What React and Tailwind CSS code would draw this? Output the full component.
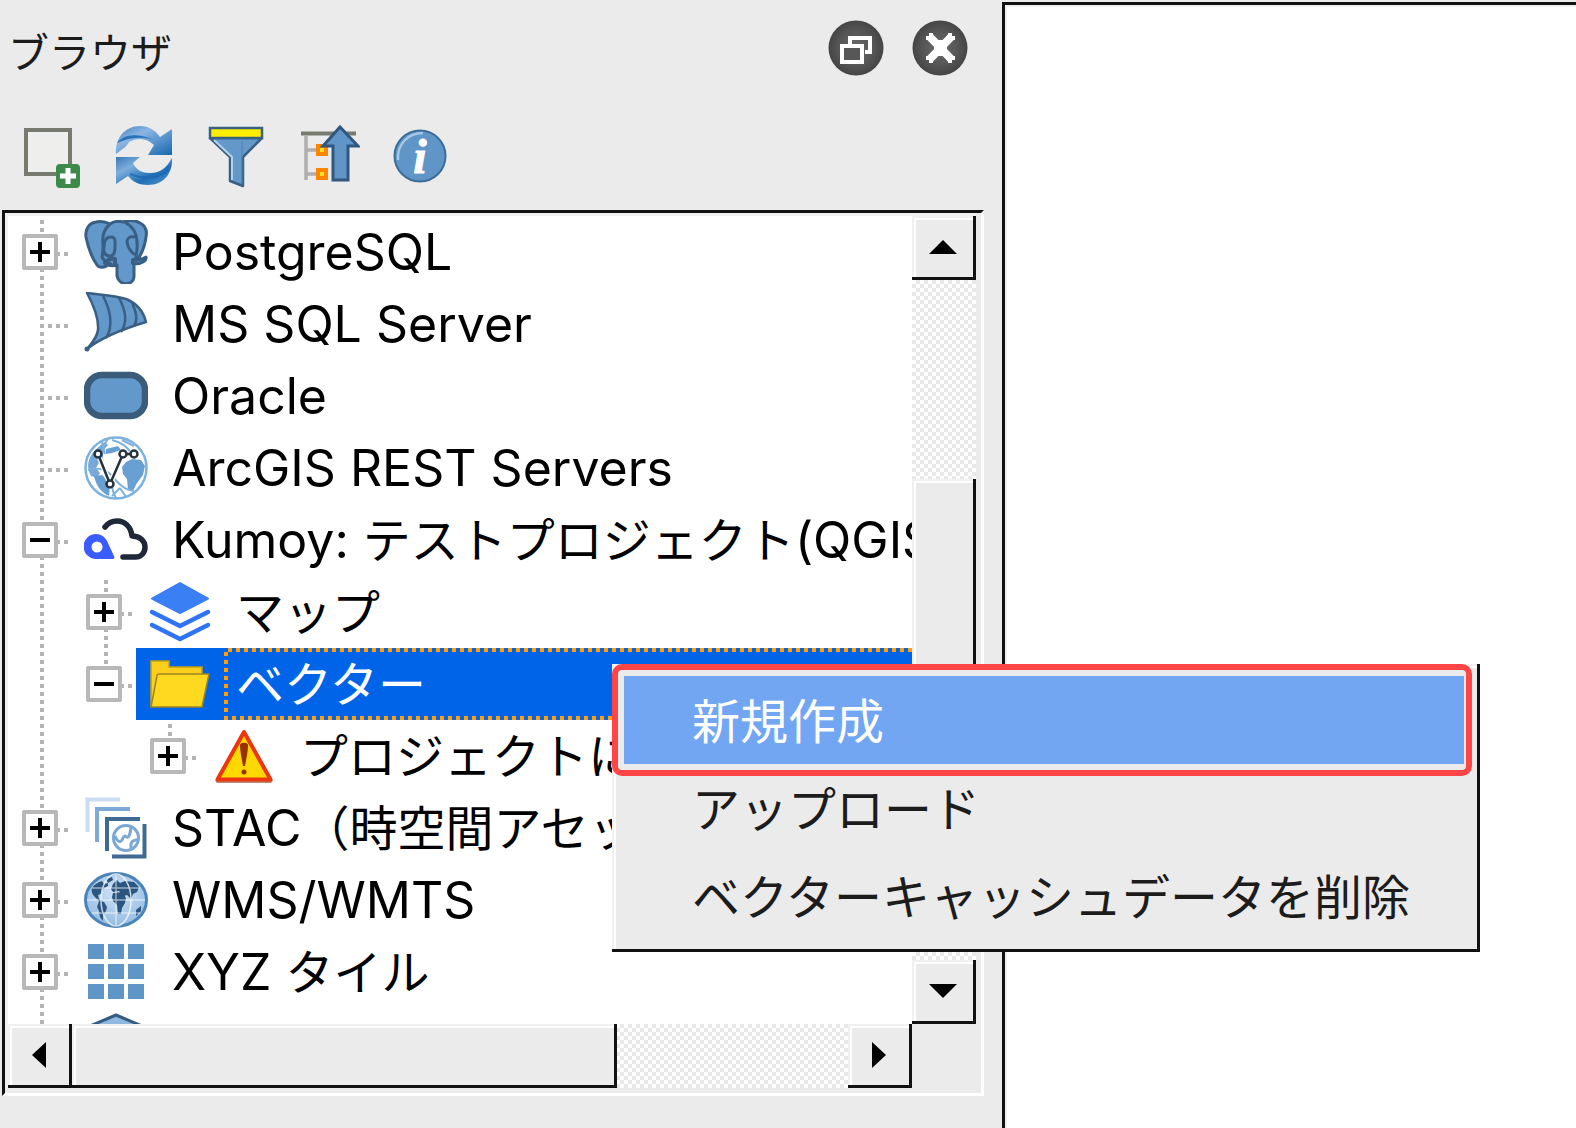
import React from "react";

const JP = "font-['Noto_Sans_CJK_JP',sans-serif]";

/* ---------- title bar icons ---------- */

function RoundIcon({ id, children }) {
  return (
    <svg viewBox="0 0 56 56" className="size-14" aria-hidden="true">
      <defs>
        <radialGradient id={id}>
          <stop offset="0" stopColor="#6a6a6a" />
          <stop offset="0.6" stopColor="#575757" />
          <stop offset="1" stopColor="#454545" />
        </radialGradient>
      </defs>
      <circle cx="28" cy="28" r="27.5" fill={`url(#${id})`} />
      {children}
    </svg>
  );
}

const FloatIcon = () => (
  <RoundIcon id="round-float">
    <path d="M22 24V18H42V32H37" fill="none" stroke="#fff" strokeWidth="4" />
    <rect x="14" y="26" width="20" height="16" fill="#575757" stroke="#fff" strokeWidth="4" />
  </RoundIcon>
);

const CloseIcon = () => (
  <RoundIcon id="round-close">
    <path d="M18 17 39 39M39 17 18 39" stroke="#fff" strokeWidth="8" />
    <rect x="22" y="20" width="13" height="16" fill="#fff" />
    <path d="M14 18h4M19 13v4M38 13v4M39 18h4M14 38h4M19 39v4M38 39v4M39 38h4" stroke="#fff" strokeWidth="4" />
  </RoundIcon>
);

/* ---------- toolbar icons ---------- */

function Icon({ children }) {
  return (
    <svg viewBox="0 0 64 64" className="size-16 shrink-0" aria-hidden="true">
      {children}
    </svg>
  );
}

const AddIcon = () => (
  <Icon>
    <rect x="6" y="6" width="44" height="44" fill="#eeeeec" stroke="#777a6e" strokeWidth="4" />
    <rect x="36" y="40" width="24" height="24" rx="4" fill="#3d8b4b" />
    <path d="M48 44v16M40 52h16" stroke="#fff" strokeWidth="5" />
  </Icon>
);

const RefreshIcon = () => (
  <Icon>
    <defs>
      <linearGradient id="rf-a" x1="0" y1="0" x2="1" y2="1">
        <stop offset="0" stopColor="#3c7ec0" />
        <stop offset="0.35" stopColor="#8ab6e2" />
        <stop offset="1" stopColor="#1767b0" />
      </linearGradient>
      <linearGradient id="rf-b" x1="0" y1="0" x2="1" y2="1">
        <stop offset="0" stopColor="#3a78b8" />
        <stop offset="0.3" stopColor="#7eaedd" />
        <stop offset="0.65" stopColor="#1f6db5" />
        <stop offset="1" stopColor="#5b9bd6" />
      </linearGradient>
    </defs>
    <path d="M4 30C3 14 13 2 28 2c9 0 15 4 20 11L60 5v26H36l6-10c-7-7-16-8-25-3-2 4-6 7-13 12z" fill="url(#rf-a)" />
    <path d="M5 19C11 10 26 8 45 17c-12-5-27-4-40 2z" fill="#2a72b8" />
    <path d="M60 34c1 16-9 27-24 27-9 0-15-3-20-9L4 60V33h24l-7 6c3 7 9 10 17 10 11 0 17-6 22-15z" fill="url(#rf-b)" />
    <path d="M57 45c-7 8-21 12-39 5" fill="none" stroke="#1767b0" strokeWidth="2" opacity="0.7" />
  </Icon>
);

const FilterIcon = () => (
  <Icon>
    <path d="M6 14h52L39 33v29l-13-5V33z" fill="#6398ca" stroke="#3b5f80" strokeWidth="2.5" strokeLinejoin="round" />
    <path d="M10 16 28 33v23" fill="none" stroke="#b5d2ec" strokeWidth="2" />
    <path d="M38 18v42" stroke="#4f81b0" strokeWidth="2" opacity="0.5" />
    <rect x="6" y="4" width="52" height="10" fill="#ffee00" stroke="#3b5f80" strokeWidth="2.5" />
  </Icon>
);

const CollapseIcon = () => (
  <Icon>
    <path d="M5 9.500h55" stroke="#777a6e" strokeWidth="4" />
    <path d="M10 11v45M10 26h10M10 50h10" fill="none" stroke="#aeaeae" strokeWidth="3.500" />
    <rect x="22" y="22" width="8" height="8" fill="#fce61a" stroke="#ff8400" strokeWidth="4" />
    <rect x="22" y="46" width="8" height="8" fill="#fce61a" stroke="#ff8400" strokeWidth="4" />
    <path d="M44 3 62 22H52v34H37V22H27z" fill="#6095c7" stroke="#30587e" strokeWidth="3" />
  </Icon>
);

const InfoIcon = () => (
  <Icon>
    <circle cx="32" cy="32" r="25.500" fill="#6095c7" stroke="#3b6c9a" strokeWidth="2" />
    <path d="M10 36C9 20 20 9 35 9" fill="none" stroke="#a5c7e6" strokeWidth="2.500" />
    <text x="32" y="49" textAnchor="middle" fill="#fff" stroke="#fff" strokeWidth="1" fontFamily="Liberation Serif, serif" fontStyle="italic" fontWeight="700" fontSize="48">i</text>
  </Icon>
);

/* ---------- tree icons ---------- */

const PostgresIcon = () => (
  <Icon>
    <g fill="#6398ca" stroke="#3a5f84" strokeWidth="3" strokeLinejoin="round" strokeLinecap="round">
      <path d="M12 2c5-1 10 0 14 2 4-3 9-3 13-2 5-2 12-2 17 1 6 3 7 9 6 14-1 8-4 16-8 22 3 1 5 0 8-2 1 3-4 7-12 7v13c-1 9-15 9-17-1V45c-3 1-6 1-9 0-4 3-9 3-11 0C8 38 4 27 2 17 1 9 5 3 12 2z" />
      <path d="M26 4c-6 5-8 12-7 20 0 5 0 9-1 13 2 4 5 6 9 7" fill="none" />
      <path d="M27 17c5 0 4 5 4 10 0 4-1 9-5 9-5 0-7-4-6-9 0-6 2-10 7-10z" />
      <path d="M42 3c8 4 12 13 11 26l-1 9" fill="none" />
      <path d="M50 17c-4-1-7 1-7 5 1 6 3 9 7 12" fill="none" />
      <path d="M21 43c3-4 6-5 10-4v6M49 43v-3c2 0 3 0 6-1" fill="none" strokeWidth="4" />
    </g>
  </Icon>
);

const MsSqlIcon = () => (
  <Icon>
    <g stroke="#3a5f84" strokeWidth="2.500" fill="none" strokeLinejoin="round">
      <path d="M3 1c14 2 26 2 39 6 10 4 17 11 20 23C42 36 18 45 3 57c5-6 10-11 11-19C15 26 9 12 3 1z" fill="#6398ca" />
      <path d="M19 4c7 13 11 30 3 42M35 6c6 11 9 24 2 34M48 11c4 8 6 17 2 23" />
    </g>
    <circle cx="3" cy="57" r="2.500" fill="#3a5f84" />
  </Icon>
);

const OracleIcon = () => (
  <Icon>
    <rect x="3" y="11" width="58" height="41" rx="15" fill="#6398ca" stroke="#3a5c7a" strokeWidth="6.500" />
  </Icon>
);

const ArcGisIcon = () => (
  <Icon>
    <circle cx="32" cy="32" r="30.500" fill="#fff" stroke="#7db1de" strokeWidth="2.500" />
    <g fill="#68a0d4">
      <path d="M8 18c4-5 8-9 13-12l3 3-6 7-4 4 2 5-4 7 4 5-3 5-6-2C3 33 3 25 8 18z" opacity="0.9" />
      <path d="M10 40l8-1 6 6 2 6-1 9C18 57 12 50 10 40z" />
      <path d="M42 26l6-3 9 1 4 6-2 9-6 8-4 8-5-1-1-11-4-5-1-7z" />
      <path d="M22 13l12-3 3 4-9 3-6 1z" />
    </g>
    <g fill="none" stroke="#7db1de" strokeWidth="2">
      <path d="M24 3c-7 9-7 20-4 31M28 4c8 2 15 6 19 13M38 4l12 6M4 34c9-3 18-1 24 6s12 14 22 15M32 62c-6-10-5-20 2-31M18 6l3 12M36 52l-8 8M36 52l6 9" />
    </g>
    <g fill="none" stroke="#fff" strokeWidth="5"><path d="M14 18 26 48 39 18h11" /></g>
    <g fill="#fff" stroke="#26333f" strokeWidth="2.500">
      <path d="M14 18 26 48 39 18h11" fill="none" />
      <circle cx="14" cy="18" r="3.500" />
      <circle cx="39" cy="18" r="3.500" />
      <circle cx="50" cy="18" r="3.500" />
      <circle cx="26" cy="48" r="3.500" />
    </g>
  </Icon>
);

const KumoyIcon = () => (
  <Icon>
    <path d="M21 19c3-4 7-6 12-6 8 0 14 6 15 15 8 0 13 5 13 11s-4 10-9 10H39" fill="none" stroke="#1f2738" strokeWidth="5.500" strokeLinecap="round" strokeLinejoin="round" />
    <path fillRule="evenodd" d="M12 26c5 0 9 3 11 7l7 15c1 2 0 3-2 3H12a12.500 12.500 0 0 1 0-25zm1 7.500a5.500 5.500 0 1 0 0 11 5.500 5.500 0 0 0 0-11z" fill="#3a5cff" />
  </Icon>
);

const LayersIcon = () => (
  <Icon>
    <path d="M32 3 60 18.500 32 33 4 18.500z" fill="#3b7ff5" stroke="#3b7ff5" strokeWidth="2" strokeLinejoin="round" />
    <path d="M4 32l28 14 28-14M4 45l28 14 28-14" fill="none" stroke="#2f74f4" strokeWidth="4.500" strokeLinecap="round" strokeLinejoin="round" />
  </Icon>
);

const FolderIcon = () => (
  <Icon>
    <path d="M3 9h18v6h33v8L48 54H3z" fill="#fbcf1b" stroke="#c59e10" strokeWidth="1.500" />
    <path d="M3 55 9 24c0-2 1-2 3-2h49l-7 33z" fill="#ffd91f" stroke="#9c8420" strokeWidth="1.500" />
  </Icon>
);

const WarningIcon = () => (
  <Icon>
    <path d="M32 10 58 56.500H6z" fill="#8a3a1a" stroke="#8a3a1a" strokeWidth="5" strokeLinejoin="round" opacity="0.6" />
    <path d="M32 8 58.500 55.500H5.500z" fill="#ffd800" stroke="#ec3610" strokeWidth="4" strokeLinejoin="round" />
    <path d="M28 21c0-3 8-3 8 0 0 7-2 15-3 21h-2c-1-6-3-14-3-21z" fill="#983000" />
    <circle cx="32" cy="48" r="2.500" fill="#983000" />
  </Icon>
);

const StacIcon = () => (
  <Icon>
    <g fill="none" strokeWidth="4">
      <path d="M3.500 36V3.500H36" stroke="#c9dcf1" />
      <path d="M13 46V13h33" stroke="#7ca9d6" />
      <path d="M23 55V23h33M60.500 28v32.500H28" stroke="#3f6a92" />
      <circle cx="42" cy="42" r="12.500" stroke="#79a8d6" strokeWidth="3" />
      <path d="M31 40c3 7 6 7 8 2s4 2 6-2 2-6 2-10M47 53c0-4-1-6 2-8s4 0 6-3" stroke="#79a8d6" strokeWidth="3" />
    </g>
  </Icon>
);

const WmsIcon = () => (
  <Icon>
    <defs>
      <radialGradient id="wms-sea" cx="0.5" cy="0.35" r="0.7">
        <stop offset="0" stopColor="#cfe2f5" />
        <stop offset="1" stopColor="#8fb9e0" />
      </radialGradient>
    </defs>
    <ellipse cx="32" cy="32" rx="30.500" ry="26.500" fill="url(#wms-sea)" stroke="#4a83b9" strokeWidth="3" />
    <g fill="#2c5680">
      <path d="M8 20c3-4 6-6 10-7l2 3 4-1v3l-5 3-2 5-3 1 1 4 4 2-3 1-6-6c-2-2-3-5-2-8z" />
      <path d="M15 33l5 1 3 5-1 4-3 4v6l-3-4-1-6-2-4z" />
      <path d="M29 16l4-4 3 3 5-2 9 1 5 5-2 5-4 2-2 5-4-4-3 1-5-5-6 1-2-3z" />
      <path d="M29 25l9-1 4 6-1 5-3 5-1 6h-3l-1-9-4-4-1-4z" />
      <path d="M22 11l6-2 1 3-5 3zM52 42l5-4v5l-5 5z" />
    </g>
    <g fill="none" stroke="#fff" strokeWidth="1.500" opacity="0.75">
      <ellipse cx="32" cy="32" rx="15" ry="26" />
      <path d="M32 6v52M3 32h58M8 20h48M8 45h48" opacity="0.7" />
    </g>
  </Icon>
);

const XyzIcon = () => (
  <Icon>
    {[4, 24, 44].map((y) =>
      [4, 24, 44].map((x) => <rect key={`${x}-${y}`} x={x} y={y} width="16" height="15" fill="#5f96c8" />)
    )}
  </Icon>
);

const HexIcon = () => (
  <Icon>
    <path d="M32 3 58 14v34L32 61 6 48V14z" fill="#8fb9e0" stroke="#355c82" strokeWidth="3" strokeLinejoin="round" />
  </Icon>
);

/* ---------- tree ---------- */

/* One indentation column. `up`, `down` and `stub` choose which dotted guides are drawn. */
function Guide({ up, down, stub, box, label }) {
  return (
    <div className="grid h-[72px] w-16 shrink-0 place-items-center">
      <svg viewBox="0 0 64 72" className="col-start-1 row-start-1 h-[72px] w-16" aria-hidden="true">
        <g stroke="#b4b4b4" strokeWidth="4" strokeDasharray="4 4">
          {up && <path d="M34 4V36" />}
          {down && <path d="M34 36V72" />}
          {stub && <path d="M40 38H60" />}
        </g>
      </svg>
      {box && (
        <button
          type="button"
          aria-label={label}
          className="col-start-1 row-start-1 grid size-9 place-items-center rounded-[2px] border-4 border-[#b8b8b8] bg-white"
        >
          <svg viewBox="0 0 20 20" className="size-5" aria-hidden="true">
            <path d={box === "+" ? "M0 10h20M10 0v20" : "M0 10h20"} stroke="#000" strokeWidth="4" />
          </svg>
        </button>
      )}
    </div>
  );
}

const NONE = {};
const LINE = { up: true, down: true };
const LEAF = { up: true, down: true, stub: true };
const OPEN = { ...LEAF, box: "-" };
const SHUT = { ...LEAF, box: "+" };
const LAST_OPEN = { up: true, stub: true, box: "-" };
const LAST_SHUT = { up: true, stub: true, box: "+" };

const ROWS = [
  { guides: [SHUT], icon: PostgresIcon, text: [["PostgreSQL"]] },
  { guides: [LEAF], icon: MsSqlIcon, text: [["MS SQL Server"]] },
  { guides: [LEAF], icon: OracleIcon, text: [["Oracle"]] },
  { guides: [LEAF], icon: ArcGisIcon, text: [["ArcGIS REST Servers"]] },
  { guides: [OPEN], icon: KumoyIcon, text: [["Kumoy: "], ["テストプロジェクト", "ja"], ["(QGIS"]] },
  { guides: [LINE, SHUT], icon: LayersIcon, text: [["マップ", "ja"]] },
  { guides: [LINE, LAST_OPEN], icon: FolderIcon, text: [["ベクター", "ja"]], selected: true },
  { guides: [LINE, NONE, LAST_SHUT], icon: WarningIcon, text: [["プロジェクトに", "ja"]] },
  { guides: [SHUT], icon: StacIcon, text: [["STAC"], ["（時空間アセット", "ja"]] },
  { guides: [SHUT], icon: WmsIcon, text: [["WMS/WMTS"]] },
  { guides: [SHUT], icon: XyzIcon, text: [["XYZ "], ["タイル", "ja"]] },
  { guides: [LEAF], icon: HexIcon, text: [] },
];

const FOCUS =
  "bg-[repeating-linear-gradient(90deg,transparent_0_4px,#ff9f0a_4px_8px),repeating-linear-gradient(90deg,#ff9f0a_0_4px,transparent_4px_8px),repeating-linear-gradient(180deg,transparent_0_4px,#ff9f0a_4px_8px)] bg-[length:100%_4px,100%_4px,4px_100%] bg-[position:top_left,bottom_left,top_left] bg-no-repeat";

function Row({ guides, icon: RowIcon, text, selected }) {
  const name = text.map(([t]) => t).join("");
  return (
    <li role="treeitem" aria-selected={!!selected} className="flex h-[72px] shrink-0">
      {guides.map((g, i) => (
        <Guide key={i} {...g} label={name} />
      ))}
      <div className={`flex min-w-0 flex-1 items-center pl-3 ${selected ? "bg-[#0064e9] text-white" : "text-black"}`}>
        <RowIcon />
        <div
          className={`ml-3 h-full min-w-0 flex-1 overflow-hidden pl-3 font-['Inter','Noto_Sans_CJK_JP',sans-serif] text-[50px] leading-[72px] whitespace-pre ${selected ? FOCUS : ""}`}
        >
          {text.map(([t, lang], i) => (
            <span key={i} lang={lang} className={lang ? `${JP} text-[48px] leading-none` : ""}>
              {t}
            </span>
          ))}
        </div>
      </div>
    </li>
  );
}

/* ---------- scroll bars ---------- */

const BEVEL = "border-r-[3px] border-b-[3px] border-[#111] bg-[#ebebeb] shadow-[inset_2px_2px_0_#f1f1f1,inset_4px_4px_0_#fff]";
const TRACK = "bg-[repeating-conic-gradient(#e8e8e8_0_25%,#fff_0_50%)] bg-[length:8px_8px]";

function ArrowButton({ d, label }) {
  return (
    <button type="button" aria-label={label} className={`grid size-16 shrink-0 place-items-center ${BEVEL}`}>
      <svg viewBox="0 0 28 28" className="size-7" aria-hidden="true">
        <path d={d} fill="#000" />
      </svg>
    </button>
  );
}

/* ---------- page ---------- */

const TOOLS = [
  ["選択レイヤを追加", AddIcon],
  ["再読み込み", RefreshIcon],
  ["ブラウザをフィルタ", FilterIcon],
  ["すべて折りたたむ", CollapseIcon],
  ["プロパティウィジェット", InfoIcon],
];

function BrowserPanel() {
  return (
    <section className="flex min-h-0 min-w-0 flex-col pb-8">
      <header className="flex h-24 items-center justify-between pr-[34px] pl-2">
        <h1 lang="ja" className={`${JP} pt-1 text-[41px] leading-[60px] text-[#1c1c1c]`}>ブラウザ</h1>
        <div className="flex gap-7">
          <button type="button" aria-label="フロート"><FloatIcon /></button>
          <button type="button" aria-label="閉じる"><CloseIcon /></button>
        </div>
      </header>
      <div role="toolbar" className="flex gap-7 px-5 pt-7 pb-[22px]">
        {TOOLS.map(([label, ToolIcon]) => (
          <button key={label} type="button" aria-label={label}><ToolIcon /></button>
        ))}
      </div>
      <div className="mr-[18px] ml-[2px] flex min-h-0 flex-1 flex-col border-[3px] border-t-[#111] border-r-white border-b-white border-l-[#111] bg-[#ebebeb]">
        <div className="mr-[5px] mb-[5px] grid min-h-0 flex-1 grid-cols-[minmax(0,1fr)_64px] grid-rows-[minmax(0,1fr)_64px] border-t-[3px] border-l-[3px] border-[#f1f1f1]">
          <ul role="tree" className="flex flex-col overflow-hidden bg-white">
            {ROWS.map((row, i) => (
              <Row key={i} {...row} />
            ))}
          </ul>
          <div className={`flex flex-col ${TRACK}`}>
            <ArrowButton label="上へ" d="M14 7 28 21H0z" />
            <div className="flex-[200_1_0%]" />
            <div className={`flex-[400_1_0%] ${BEVEL}`} />
            <div className="flex-[80_1_0%]" />
            <ArrowButton label="下へ" d="M0 7H28L14 21z" />
          </div>
          <div className={`flex ${TRACK}`}>
            <ArrowButton label="左へ" d="M21 1V27L7 14z" />
            <div className={`flex-[544_1_0%] ${BEVEL}`} />
            <div className="flex-[232_1_0%]" />
            <ArrowButton label="右へ" d="M7 1V27L21 14z" />
          </div>
        </div>
      </div>
    </section>
  );
}

const MENU_ITEM = "pr-[54px] pb-1 pl-[68px] text-left";

function ContextMenu() {
  return (
    <div
      role="menu"
      lang="ja"
      className={`absolute top-[664px] left-[612px] flex flex-col border-r-[3px] border-b-[3px] border-[#111] bg-[#ebebeb] p-3 pr-[13px] pb-[9px] ${JP} text-[48px] leading-[84px] whitespace-nowrap text-[#1c1c1c] shadow-[inset_2px_2px_0_#f1f1f1,inset_4px_4px_0_#fff]`}
    >
      <button type="button" role="menuitem" className={`${MENU_ITEM} bg-[#72a6f3] text-white`}>新規作成</button>
      <button type="button" role="menuitem" className={MENU_ITEM}>アップロード</button>
      <button type="button" role="menuitem" className={MENU_ITEM}>ベクターキャッシュデータを削除</button>
      <div className="pointer-events-none absolute top-0 right-[5px] left-0 h-28 rounded-[10px] border-[6px] border-[#ff4545]" />
    </div>
  );
}

export default function App() {
  return (
    <div className="relative grid h-screen grid-cols-[501fr_287fr] grid-rows-[minmax(0,1fr)] overflow-hidden bg-[#ebebeb]">
      <BrowserPanel />
      <main className="mt-[2px] min-w-0 border-t-[3px] border-l-[3px] border-[#111] bg-white shadow-[inset_2px_2px_0_#f1f1f1]" />
      <ContextMenu />
    </div>
  );
}
